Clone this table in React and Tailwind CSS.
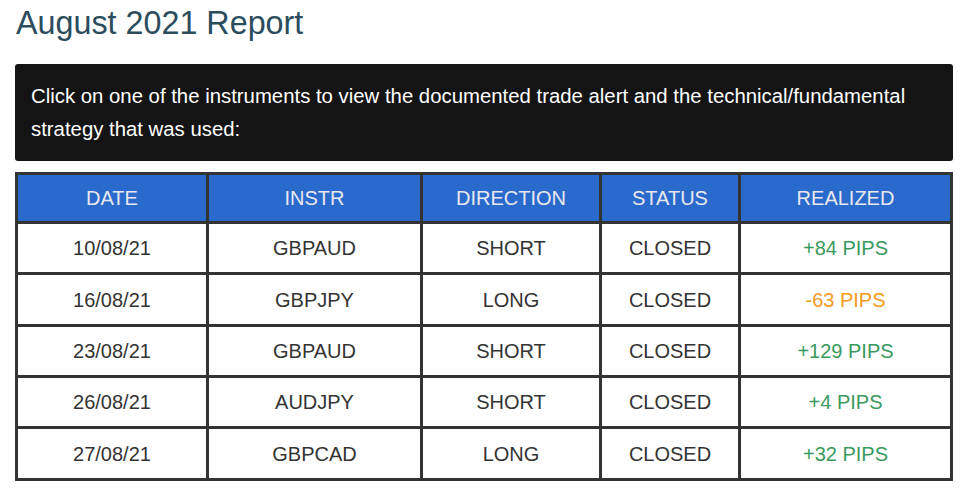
const rows = [
  { date: "10/08/21", instr: "GBPAUD", dir: "SHORT", status: "CLOSED", pips: "+84 PIPS", h: "h-[51px]" },
  { date: "16/08/21", instr: "GBPJPY", dir: "LONG", status: "CLOSED", pips: "-63 PIPS", h: "h-[52px]" },
  { date: "23/08/21", instr: "GBPAUD", dir: "SHORT", status: "CLOSED", pips: "+129 PIPS", h: "h-[51px]" },
  { date: "26/08/21", instr: "AUDJPY", dir: "SHORT", status: "CLOSED", pips: "+4 PIPS", h: "h-[51px]" },
  { date: "27/08/21", instr: "GBPCAD", dir: "LONG", status: "CLOSED", pips: "+32 PIPS", h: "h-[52px]" },
];

const App = () => {
  return (
    <div className="w-[965px] h-[497px] bg-white px-[15px] pt-[5px] font-['Liberation_Sans',Arial,sans-serif] overflow-hidden">
      <h1 className="text-[32.3px] leading-[36px] text-[#2b4c5c] ml-[1px]">August 2021 Report</h1>

      <div className="mt-[23px] w-[938px] bg-[#141414] rounded-[3px] px-4 pt-4 pb-[15px] text-white text-[20.35px] leading-[33px]">
        Click on one of the instruments to view the documented trade alert and the technical/fundamental strategy that was used:
      </div>

      <table className="mt-[11px] w-[938px] table-fixed border-collapse text-[20px] text-center">
        <colgroup>
          <col className="w-[191px]" />
          <col className="w-[214px]" />
          <col className="w-[179px]" />
          <col className="w-[139px]" />
          <col className="w-[212px]" />
        </colgroup>
        <thead>
          <tr className="h-[49px] bg-[#2a6acc] text-[#e8e8ee]">
            {["DATE", "INSTR", "DIRECTION", "STATUS", "REALIZED"].map((h) => (
              <th key={h} className="border-[3px] border-[#333] font-normal">
                {h}
              </th>
            ))}
          </tr>
        </thead>
        <tbody className="text-[#333]">
          {rows.map((r, i) => (
            <tr key={i} className={r.h}>
              <td className="border-[3px] border-[#333]">{r.date}</td>
              <td className="border-[3px] border-[#333]">{r.instr}</td>
              <td className="border-[3px] border-[#333]">{r.dir}</td>
              <td className="border-[3px] border-[#333]">{r.status}</td>
              <td className={`border-[3px] border-[#333] ${r.pips.startsWith("-") ? "text-[#f39a21]" : "text-[#3a9a5e]"}`}>
                {r.pips}
              </td>
            </tr>
          ))}
        </tbody>
      </table>
    </div>
  );
};

export default App;
